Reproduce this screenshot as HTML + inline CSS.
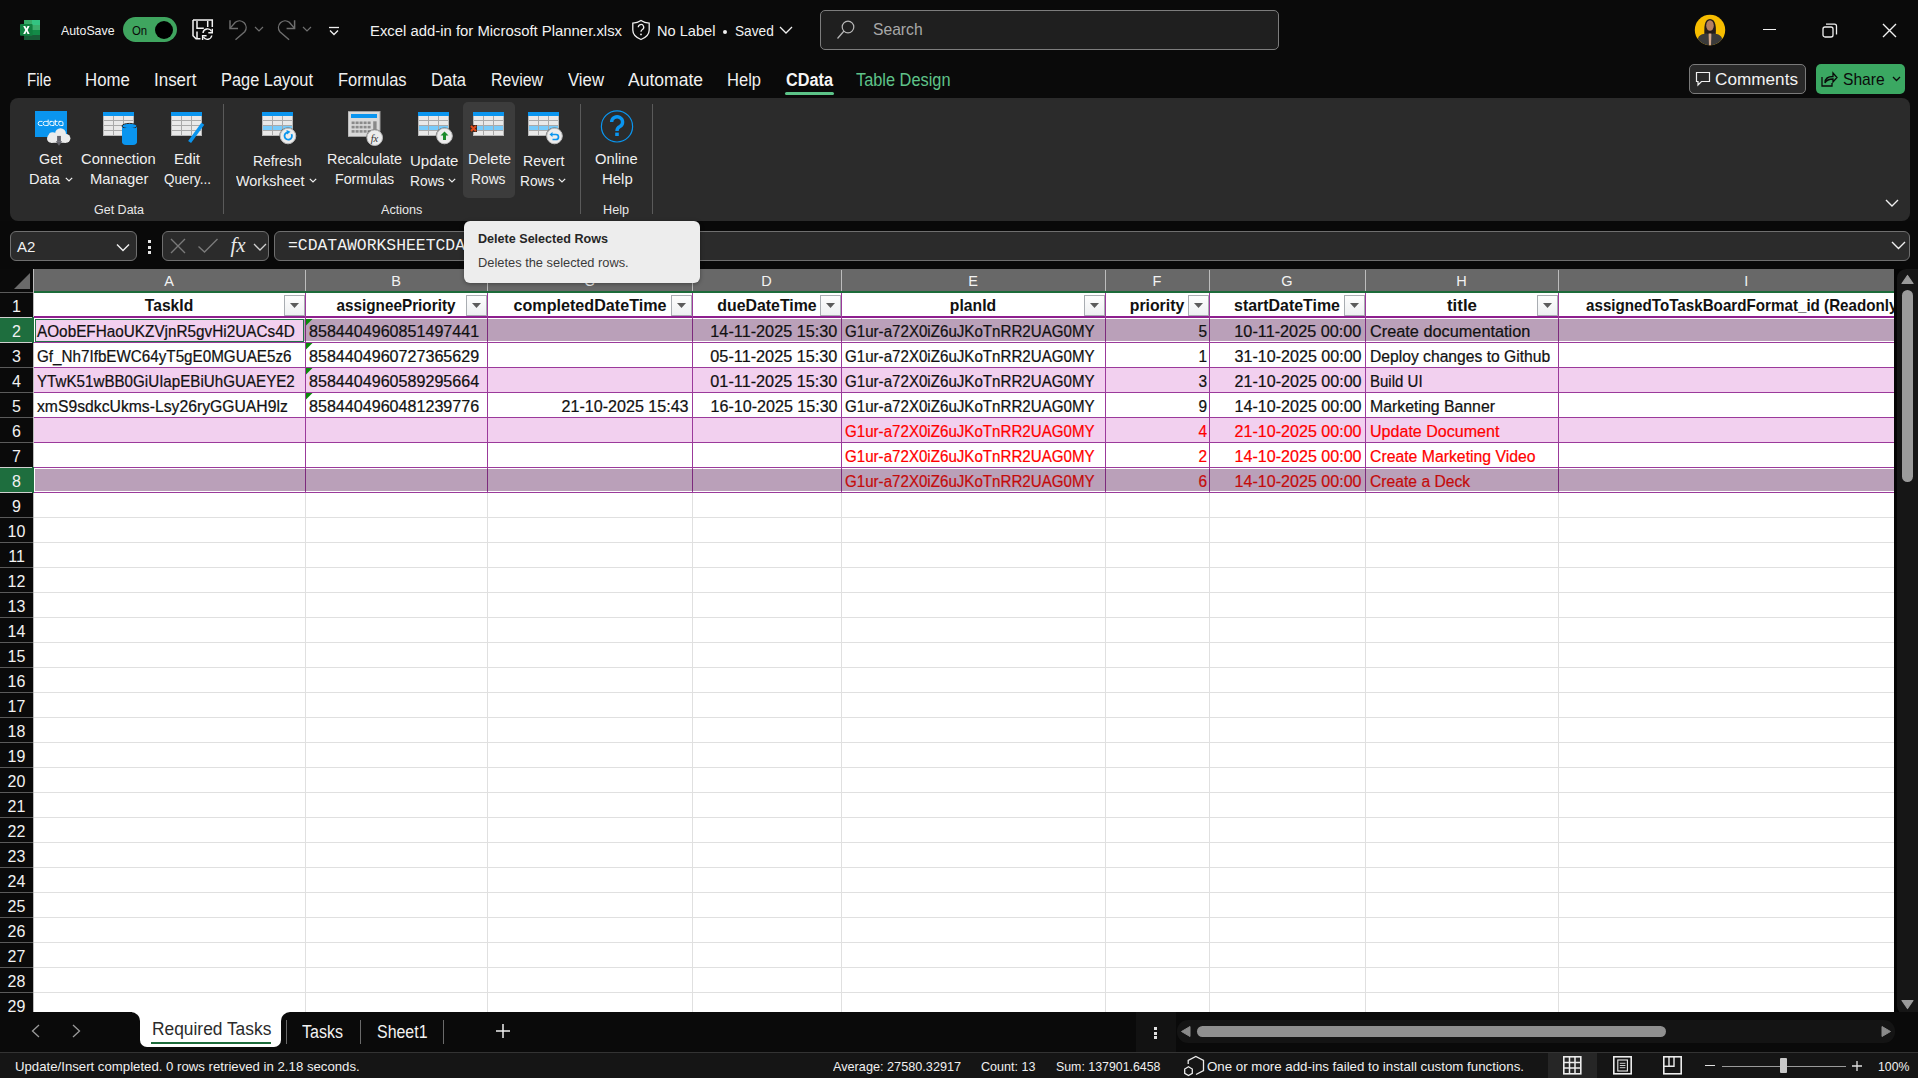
<!DOCTYPE html>
<html><head><meta charset="utf-8"><title>Excel</title><style>
*{margin:0;padding:0;box-sizing:border-box}
html,body{width:1918px;height:1078px;overflow:hidden;background:#0a0a0a;font-family:"Liberation Sans",sans-serif;position:relative}
.a{position:absolute}
.t{position:absolute;white-space:pre;line-height:1}
.s{-webkit-text-stroke:0.22px currentColor}
</style></head><body>
<svg class="a" style="left:20px;top:20px;" width="20" height="20" viewBox="0 0 20 20">
<rect x="4" y="0" width="16" height="20" fill="#1a7f45"/>
<rect x="4" y="0" width="16" height="5" fill="#38ac68"/>
<rect x="12" y="0" width="8" height="5" fill="#33c481"/>
<rect x="12" y="5" width="8" height="5" fill="#3cae6c"/>
<rect x="12" y="10" width="8" height="5" fill="#138a47"/>
<rect x="4" y="15" width="16" height="5" fill="#185c37"/>
<rect x="0" y="4" width="12.6" height="11.7" rx="1" fill="#118040"/>
<path d="M3.2 6 L5.3 6 L6.4 8.6 L7.5 6 L9.6 6 L7.6 9.9 L9.6 14 L7.5 14 L6.4 11.3 L5.3 14 L3.2 14 L5.2 9.9 Z" fill="#fff"/>
</svg>
<div class="t" style="left:61.00px;top:23.95px;font-size:13px;color:#f2f2f2;transform:scaleX(0.9490);transform-origin:left 50%;">AutoSave</div>
<div class="a" style="left:123px;top:17px;width:54px;height:25px;background:#3fa55f;border-radius:12.5px;"></div>
<div class="t" style="left:132.00px;top:25.32px;font-size:12.8px;color:#0a0a0a;transform:scaleX(0.8900);transform-origin:left 50%;">On</div>
<div class="a" style="left:154.5px;top:21px;width:18px;height:18px;border-radius:50%;background:#000"></div>
<svg class="a" style="left:192px;top:19px;" width="23" height="23" viewBox="0 0 23 23">
<path d="M1 1 V16.8 L4 19.8 H8.5" fill="none" stroke="#f4f4f4" stroke-width="1.5"/>
<path d="M1 1 H20.3 V8" fill="none" stroke="#f4f4f4" stroke-width="1.5"/>
<path d="M5 2 V9.2 H11.8" fill="none" stroke="#f4f4f4" stroke-width="1.5"/>
<path d="M15.7 2 V8" fill="none" stroke="#f4f4f4" stroke-width="1.5"/>
<path d="M5 12.5 V19.8" fill="none" stroke="#f4f4f4" stroke-width="1.5"/>
<path d="M11 14 A4.6 4.6 0 0 1 19.6 12.3" fill="none" stroke="#f4f4f4" stroke-width="1.4"/>
<path d="M20.3 9.8 V13.8 H16.3" fill="none" stroke="#f4f4f4" stroke-width="1.4"/>
<path d="M19.8 16.5 A4.6 4.6 0 0 1 11.4 18.2" fill="none" stroke="#f4f4f4" stroke-width="1.4"/>
<path d="M10.6 21 V16.8 H14.6" fill="none" stroke="#f4f4f4" stroke-width="1.4"/>
</svg>
<svg class="a" style="left:228px;top:19px;" width="21" height="22" viewBox="0 0 21 22"><path d="M2 1.2 V9.4 H10" fill="none" stroke="#6e6e6e" stroke-width="1.5"/><path d="M2 9.4 L7.3 3.3 A6.7 6.7 0 0 1 16.7 12.7 L7.5 20.7" fill="none" stroke="#6e6e6e" stroke-width="1.4"/></svg>
<svg class="a" style="left:254px;top:26px;" width="10" height="6" viewBox="0 0 10 6"><path d="M1 1 L5 5 L9 1" fill="none" stroke="#6e6e6e" stroke-width="1.2"/></svg>
<svg class="a" style="left:276px;top:19px;" width="21" height="22" viewBox="0 0 21 22"><g transform="translate(20.6,0) scale(-1,1)"><path d="M2 1.2 V9.4 H10" fill="none" stroke="#6e6e6e" stroke-width="1.5"/><path d="M2 9.4 L7.3 3.3 A6.7 6.7 0 0 1 16.7 12.7 L7.5 20.7" fill="none" stroke="#6e6e6e" stroke-width="1.4"/></g></svg>
<svg class="a" style="left:302px;top:26px;" width="10" height="6" viewBox="0 0 10 6"><path d="M1 1 L5 5 L9 1" fill="none" stroke="#6e6e6e" stroke-width="1.2"/></svg>
<svg class="a" style="left:328px;top:26px;" width="12" height="10" viewBox="0 0 12 10"><path d="M1 1.5 H11" stroke="#f0f0f0" stroke-width="1.3"/><path d="M2 4.5 L6 8.5 L10 4.5" fill="none" stroke="#f0f0f0" stroke-width="1.3"/></svg>
<div class="t" style="left:369.50px;top:22.83px;font-size:15.5px;color:#f2f2f2;transform:scaleX(0.9591);transform-origin:left 50%;">Excel add-in for Microsoft Planner.xlsx</div>
<svg class="a" style="left:631px;top:19px;" width="20" height="22" viewBox="0 0 20 22">
<path d="M10 1.5 C7 3.5 4.5 4 1.8 4.2 V11 C1.8 15.5 5 18.5 10 20.5 C15 18.5 18.2 15.5 18.2 11 V4.2 C15.5 4 13 3.5 10 1.5 Z" fill="none" stroke="#f0f0f0" stroke-width="1.3"/>
<path d="M7.3 8.3 A2.7 2.7 0 1 1 11.4 10.5 C10.4 11.1 10 11.6 10 12.8" fill="none" stroke="#f0f0f0" stroke-width="1.3"/>
<circle cx="10" cy="15.4" r="0.9" fill="#f0f0f0"/>
</svg>
<div class="t" style="left:656.50px;top:22.75px;font-size:15px;color:#f2f2f2;transform:scaleX(0.9742);transform-origin:left 50%;">No Label</div>
<div class="a" style="left:723px;top:29.5px;width:4.2px;height:4.2px;border-radius:50%;background:#f0f0f0"></div>
<div class="t" style="left:734.50px;top:22.75px;font-size:15px;color:#f2f2f2;transform:scaleX(0.9119);transform-origin:left 50%;">Saved</div>
<svg class="a" style="left:779px;top:26px;" width="14" height="8" viewBox="0 0 14 8"><path d="M1 1 L7 7 L13 1" fill="none" stroke="#f0f0f0" stroke-width="1.3"/></svg>
<div class="a" style="left:820px;top:10px;width:459px;height:40px;background:#1f1f1f;border:1px solid #7d7d7d;border-radius:5px;"></div>
<svg class="a" style="left:835px;top:20px;" width="20" height="20" viewBox="0 0 20 20"><circle cx="13" cy="7" r="5.8" fill="none" stroke="#b8b8b8" stroke-width="1.2"/><path d="M9 11 L2.5 18.5" stroke="#b8b8b8" stroke-width="1.2"/></svg>
<div class="t" style="left:872.50px;top:20.55px;font-size:17px;color:#a8a8a8;transform:scaleX(0.9206);transform-origin:left 50%;">Search</div>
<svg class="a" style="left:1694px;top:14px;" width="32" height="32" viewBox="0 0 32 32">
<defs><clipPath id="avc"><circle cx="16" cy="16" r="15.2"/></clipPath></defs>
<circle cx="16" cy="16" r="15.2" fill="#f7bd00"/>
<g clip-path="url(#avc)">
<path d="M10.5 22 C10 14 10 5 16 5 C22 5 22.5 14 21.5 22 Z" fill="#231c1a"/>
<ellipse cx="16" cy="11.5" rx="3.8" ry="5.2" fill="#b57f62"/>
<path d="M2 32 L4.5 23 C6 20.5 10 19.5 13 19.5 L16 21 L19 19.5 C22 19.5 26 20.5 27.5 23 L30 32 Z" fill="#3a3a3a"/>
<path d="M14.6 19.5 L17.4 19.5 L17 32 L15 32 Z" fill="#d3a88c"/>
</g></svg>
<div class="a" style="left:1763px;top:29px;width:13px;height:1.3px;background:#f0f0f0;"></div>
<svg class="a" style="left:1822px;top:23px;" width="16" height="16" viewBox="0 0 16 16"><rect x="1" y="4" width="10" height="10" rx="2" fill="none" stroke="#f0f0f0" stroke-width="1.3"/><path d="M4 1.2 H12.5 A2 2 0 0 1 14.5 3.2 V11.5" fill="none" stroke="#f0f0f0" stroke-width="1.3"/></svg>
<svg class="a" style="left:1882px;top:23px;" width="15" height="15" viewBox="0 0 15 15"><path d="M1 1 L14 14 M14 1 L1 14" stroke="#f0f0f0" stroke-width="1.4"/></svg>
<div class="t" style="left:27.00px;top:72.33px;font-size:17.5px;color:#f0f0f0;transform:scaleX(0.8616);transform-origin:left 50%;">File</div>
<div class="t" style="left:84.60px;top:72.33px;font-size:17.5px;color:#f0f0f0;transform:scaleX(0.9596);transform-origin:left 50%;">Home</div>
<div class="t" style="left:154.00px;top:72.33px;font-size:17.5px;color:#f0f0f0;transform:scaleX(0.9685);transform-origin:left 50%;">Insert</div>
<div class="t" style="left:221.00px;top:72.33px;font-size:17.5px;color:#f0f0f0;transform:scaleX(0.9361);transform-origin:left 50%;">Page Layout</div>
<div class="t" style="left:338.00px;top:72.33px;font-size:17.5px;color:#f0f0f0;transform:scaleX(0.9405);transform-origin:left 50%;">Formulas</div>
<div class="t" style="left:431.00px;top:72.33px;font-size:17.5px;color:#f0f0f0;transform:scaleX(0.9467);transform-origin:left 50%;">Data</div>
<div class="t" style="left:491.00px;top:72.33px;font-size:17.5px;color:#f0f0f0;transform:scaleX(0.9061);transform-origin:left 50%;">Review</div>
<div class="t" style="left:568.00px;top:72.33px;font-size:17.5px;color:#f0f0f0;transform:scaleX(0.9568);transform-origin:left 50%;">View</div>
<div class="t" style="left:628.00px;top:72.33px;font-size:17.5px;color:#f0f0f0;transform:scaleX(1.0013);transform-origin:left 50%;">Automate</div>
<div class="t" style="left:727.00px;top:72.33px;font-size:17.5px;color:#f0f0f0;transform:scaleX(0.9444);transform-origin:left 50%;">Help</div>
<div class="t" style="left:785.50px;top:72.33px;font-size:17.5px;color:#f5f5f5;font-weight:bold;transform:scaleX(0.9293);transform-origin:left 50%;">CData</div>
<div class="a" style="left:785px;top:92px;width:49px;height:3px;background:#5cc388;border-radius:1.5px;"></div>
<div class="t" style="left:856.00px;top:72.33px;font-size:17.5px;color:#5fc389;transform:scaleX(0.9341);transform-origin:left 50%;">Table Design</div>
<div class="a" style="left:1689px;top:64px;width:117px;height:30px;background:#292929;border:1px solid #7a7a7a;border-radius:5px;"></div>
<svg class="a" style="left:1695px;top:71px;" width="16" height="16" viewBox="0 0 16 16"><path d="M1.5 1.5 H14.5 V10.5 H6.5 L3 14 V10.5 H1.5 Z" fill="none" stroke="#f0f0f0" stroke-width="1.2"/></svg>
<div class="t" style="left:1715.00px;top:71.25px;font-size:17px;color:#f2f2f2;transform:scaleX(1.0099);transform-origin:left 50%;">Comments</div>
<div class="a" style="left:1816px;top:64px;width:89px;height:30px;background:#3ba862;border-radius:5px;"></div>
<svg class="a" style="left:1820px;top:70px;" width="18" height="18" viewBox="0 0 18 18"><path d="M2 7 V16 H12 V13" fill="none" stroke="#0a0a0a" stroke-width="1.3"/><path d="M5 13 C5 8 8 6.5 13 6.5 V3 L17 7.5 L13 12 V9 C9 9 6.5 10 5 13 Z" fill="none" stroke="#0a0a0a" stroke-width="1.3"/></svg>
<div class="t" style="left:1842.50px;top:71.25px;font-size:17px;color:#0a0a0a;transform:scaleX(0.9168);transform-origin:left 50%;">Share</div>
<svg class="a" style="left:1892px;top:76px;" width="9" height="6" viewBox="0 0 9 6"><path d="M1 1 L4.5 4.5 L8 1" fill="none" stroke="#0a0a0a" stroke-width="1.3"/></svg>
<div class="a" style="left:10px;top:98px;width:1900px;height:123px;background:#2b2b2b;border-radius:8px;"></div>
<svg class="a" style="left:33px;top:109px;" width="40" height="38" viewBox="0 0 40 38">
<rect x="2" y="2" width="32" height="26" fill="#0a95ef"/>
<g fill="none" stroke="#ffffff" stroke-width="0.9">
<path d="M9.5 12.4 H7.2 A2.05 2.05 0 0 0 7.2 16.5 H9.5"/>
<path d="M15.2 10.6 V16.5 H12.2 A2.05 2.05 0 0 1 12.2 12.4 H15.2"/>
<path d="M16.6 12.4 H19.4 A1.6 1.6 0 0 1 21 14 V16.5 H18.6 A2.05 2.05 0 0 1 18.6 12.4"/>
<path d="M22.3 10.8 V15 A1.5 1.5 0 0 0 23.8 16.5 H24.8 M21.4 12.4 H24.6"/>
<path d="M25.6 12.4 H28.4 A1.6 1.6 0 0 1 30 14 V16.5 H27.6 A2.05 2.05 0 0 1 27.6 12.4"/>
</g>
<g fill="#ececec">
<circle cx="27.5" cy="24.6" r="5.4"/>
<circle cx="19.6" cy="27.3" r="4.1"/>
<circle cx="33" cy="29.3" r="4.4"/>
<circle cx="18.3" cy="29.5" r="4.3"/>
<rect x="18" y="27" width="15" height="6.8"/>
</g>
<rect x="24.1" y="26.9" width="3.8" height="5.6" fill="#62626a"/>
<path d="M22.8 32.3 H29.2 L26 36.8 Z" fill="#62626a"/>
</svg>
<div class="t" style="left:38.90px;top:152.42px;font-size:14.8px;color:#f0f0f0;transform:scaleX(0.9682);transform-origin:left 50%;">Get</div>
<div class="t" style="left:28.70px;top:171.92px;font-size:14.8px;color:#f0f0f0;transform:scaleX(0.9851);transform-origin:left 50%;">Data</div>
<svg class="a" style="left:65px;top:177px;" width="8" height="5" viewBox="0 0 8 5"><path d="M0.8 0.8 L4 4 L7.2 0.8" fill="none" stroke="#f0f0f0" stroke-width="1.2"/></svg>
<svg class="a" style="left:103px;top:112px;" width="36" height="34" viewBox="0 0 36 34"><rect x="0" y="0" width="31" height="24" fill="#e9e9e9"/><rect x="0" y="0" width="31" height="4" fill="#0a95ef"/><path d="M0 8.5 H31" stroke="#a9a9a9" stroke-width="1"/><path d="M0 13.5 H31" stroke="#a9a9a9" stroke-width="1"/><path d="M0 18.5 H31" stroke="#a9a9a9" stroke-width="1"/><path d="M10.5 4 V24" stroke="#a9a9a9" stroke-width="1"/><path d="M20.5 4 V24" stroke="#a9a9a9" stroke-width="1"/><rect x="0.5" y="0.5" width="30" height="23" fill="none" stroke="#b8b8b8" stroke-width="1"/><rect x="0" y="0" width="31" height="4" fill="#0a95ef"/>
<rect x="19" y="13" width="15" height="19" rx="3" fill="#0a95ef"/>
<ellipse cx="26.5" cy="14" rx="7.5" ry="2.6" fill="#0a95ef" stroke="#2b2b2b" stroke-width="1"/>
<rect x="19" y="16" width="15" height="17" rx="4" fill="#0a95ef"/>
</svg>
<div class="t" style="left:81.00px;top:152.42px;font-size:14.8px;color:#f0f0f0;transform:scaleX(0.9965);transform-origin:left 50%;">Connection</div>
<div class="t" style="left:89.60px;top:171.92px;font-size:14.8px;color:#f0f0f0;transform:scaleX(0.9999);transform-origin:left 50%;">Manager</div>
<svg class="a" style="left:171px;top:112px;" width="36" height="32" viewBox="0 0 36 32"><rect x="0" y="0" width="31" height="24" fill="#e9e9e9"/><rect x="0" y="0" width="31" height="4" fill="#0a95ef"/><path d="M0 8.5 H31" stroke="#a9a9a9" stroke-width="1"/><path d="M0 13.5 H31" stroke="#a9a9a9" stroke-width="1"/><path d="M0 18.5 H31" stroke="#a9a9a9" stroke-width="1"/><path d="M10.5 4 V24" stroke="#a9a9a9" stroke-width="1"/><path d="M20.5 4 V24" stroke="#a9a9a9" stroke-width="1"/><rect x="0.5" y="0.5" width="30" height="23" fill="none" stroke="#b8b8b8" stroke-width="1"/><rect x="0" y="0" width="31" height="4" fill="#0a95ef"/>
<path d="M31.8 11.8 L18.6 30" stroke="#0a95ef" stroke-width="3.6"/>
</svg>
<div class="t" style="left:174.00px;top:152.42px;font-size:14.8px;color:#f0f0f0;transform:scaleX(1.0196);transform-origin:left 50%;">Edit</div>
<div class="t" style="left:163.60px;top:171.92px;font-size:14.8px;color:#f0f0f0;transform:scaleX(0.9101);transform-origin:left 50%;">Query...</div>
<div class="t" style="left:93.50px;top:204.00px;font-size:12px;color:#e8e8e8;transform:scaleX(1.0410);transform-origin:left 50%;">Get Data</div>
<div class="a" style="left:223px;top:104px;width:1px;height:110px;background:#5a5a5a;"></div>
<svg class="a" style="left:262px;top:112px;" width="36" height="33" viewBox="0 0 36 33"><rect x="0" y="0" width="31" height="24" fill="#e9e9e9"/><rect x="0" y="0" width="31" height="4" fill="#0a95ef"/><rect x="0.5" y="14" width="30" height="4" fill="#78cbfb"/><path d="M0 8.5 H31" stroke="#a9a9a9" stroke-width="1"/><path d="M0 13.5 H31" stroke="#a9a9a9" stroke-width="1"/><path d="M0 18.5 H31" stroke="#a9a9a9" stroke-width="1"/><path d="M10.5 4 V24" stroke="#a9a9a9" stroke-width="1"/><path d="M20.5 4 V24" stroke="#a9a9a9" stroke-width="1"/><rect x="0.5" y="0.5" width="30" height="23" fill="none" stroke="#b8b8b8" stroke-width="1"/><rect x="0" y="0" width="31" height="4" fill="#0a95ef"/><circle cx="26" cy="24" r="8.8" fill="#2b2b2b" fill-opacity="0.55"/><circle cx="26" cy="24" r="7.8" fill="#ececec" stroke="#b8b8b8" stroke-width="1"/>
<path d="M29.5 22.2 A3.7 3.7 0 1 1 25.5 20.3" fill="none" stroke="#0a95ef" stroke-width="1.8"/>
<path d="M24.5 18 L28.5 19.8 L25 22.5 Z" fill="#0a95ef"/>
</svg>
<div class="t" style="left:253.00px;top:154.12px;font-size:14.8px;color:#f0f0f0;transform:scaleX(0.9380);transform-origin:left 50%;">Refresh</div>
<div class="t" style="left:236.00px;top:174.12px;font-size:14.8px;color:#f0f0f0;transform:scaleX(0.9737);transform-origin:left 50%;">Worksheet</div>
<svg class="a" style="left:309px;top:178px;" width="8" height="5" viewBox="0 0 8 5"><path d="M0.8 0.8 L4 4 L7.2 0.8" fill="none" stroke="#f0f0f0" stroke-width="1.2"/></svg>
<svg class="a" style="left:348px;top:111px;" width="36" height="36" viewBox="0 0 36 36">
<rect x="0" y="0.5" width="32" height="25" fill="#d9d9d9" stroke="#a0a0a0" stroke-width="1"/>
<rect x="3" y="3" width="26" height="4" fill="#0a95ef"/>
<g fill="#8a8a8a"><rect x="3.6" y="10.5" width="3" height="2.6"/><rect x="7.6" y="10.5" width="3" height="2.6"/><rect x="11.6" y="10.5" width="3" height="2.6"/><rect x="15.6" y="10.5" width="3" height="2.6"/><rect x="19.6" y="10.5" width="3" height="2.6"/><rect x="3.6" y="14.8" width="3" height="2.6"/><rect x="7.6" y="14.8" width="3" height="2.6"/><rect x="11.6" y="14.8" width="3" height="2.6"/><rect x="15.6" y="14.8" width="3" height="2.6"/><rect x="19.6" y="14.8" width="3" height="2.6"/><rect x="3.6" y="19.1" width="3" height="2.6"/><rect x="7.6" y="19.1" width="3" height="2.6"/><rect x="11.6" y="19.1" width="3" height="2.6"/><rect x="15.6" y="19.1" width="3" height="2.6"/><rect x="19.6" y="19.1" width="3" height="2.6"/><rect x="25.2" y="10.3" width="3.4" height="8.5"/></g>
<circle cx="26.7" cy="26.7" r="8.8" fill="#2b2b2b" fill-opacity="0.55"/><circle cx="26.7" cy="26.7" r="7.8" fill="#ececec" stroke="#b8b8b8" stroke-width="1"/><text x="26.5" y="30.5" font-family="Liberation Serif" font-style="italic" font-size="10.5" fill="#333" text-anchor="middle">fx</text></svg>
<div class="t" style="left:326.50px;top:152.42px;font-size:14.8px;color:#f0f0f0;transform:scaleX(0.9712);transform-origin:left 50%;">Recalculate</div>
<div class="t" style="left:334.60px;top:171.92px;font-size:14.8px;color:#f0f0f0;transform:scaleX(0.9599);transform-origin:left 50%;">Formulas</div>
<svg class="a" style="left:418px;top:112px;" width="36" height="33" viewBox="0 0 36 33"><rect x="0" y="0" width="31" height="24" fill="#e9e9e9"/><rect x="0" y="0" width="31" height="4" fill="#0a95ef"/><rect x="0.5" y="14" width="30" height="4" fill="#78cbfb"/><path d="M0 8.5 H31" stroke="#a9a9a9" stroke-width="1"/><path d="M0 13.5 H31" stroke="#a9a9a9" stroke-width="1"/><path d="M0 18.5 H31" stroke="#a9a9a9" stroke-width="1"/><path d="M10.5 4 V24" stroke="#a9a9a9" stroke-width="1"/><path d="M20.5 4 V24" stroke="#a9a9a9" stroke-width="1"/><rect x="0.5" y="0.5" width="30" height="23" fill="none" stroke="#b8b8b8" stroke-width="1"/><rect x="0" y="0" width="31" height="4" fill="#0a95ef"/><circle cx="26.5" cy="24" r="8.8" fill="#2b2b2b" fill-opacity="0.55"/><circle cx="26.5" cy="24" r="7.8" fill="#ececec" stroke="#b8b8b8" stroke-width="1"/>
<path d="M26.5 19.5 L30.5 23.5 H28 V28 H25 V23.5 H22.5 Z" fill="#1a8a2a"/>
</svg>
<div class="t" style="left:409.50px;top:154.12px;font-size:14.8px;color:#f0f0f0;transform:scaleX(1.0143);transform-origin:left 50%;">Update</div>
<div class="t" style="left:409.50px;top:174.12px;font-size:14.8px;color:#f0f0f0;transform:scaleX(0.9324);transform-origin:left 50%;">Rows</div>
<svg class="a" style="left:448px;top:178px;" width="8" height="5" viewBox="0 0 8 5"><path d="M0.8 0.8 L4 4 L7.2 0.8" fill="none" stroke="#f0f0f0" stroke-width="1.2"/></svg>
<div class="a" style="left:463px;top:102px;width:52px;height:96px;background:#3c3c3c;border-radius:5px;"></div>
<svg class="a" style="left:469px;top:112px;" width="36" height="26" viewBox="0 0 36 26"><g transform="translate(4,0)"><rect x="0" y="0" width="31" height="24" fill="#e9e9e9"/><rect x="0" y="0" width="31" height="4" fill="#0a95ef"/><rect x="0.5" y="14" width="30" height="4" fill="#78cbfb"/><path d="M0 8.5 H31" stroke="#a9a9a9" stroke-width="1"/><path d="M0 13.5 H31" stroke="#a9a9a9" stroke-width="1"/><path d="M0 18.5 H31" stroke="#a9a9a9" stroke-width="1"/><path d="M10.5 4 V24" stroke="#a9a9a9" stroke-width="1"/><path d="M20.5 4 V24" stroke="#a9a9a9" stroke-width="1"/><rect x="0.5" y="0.5" width="30" height="23" fill="none" stroke="#b8b8b8" stroke-width="1"/><rect x="0" y="0" width="31" height="4" fill="#0a95ef"/></g>
<rect x="1" y="13" width="7" height="7" fill="#3a2a22"/>
<path d="M2 14 L7 19 M7 14 L2 19" stroke="#e04a1a" stroke-width="2"/>
</svg>
<div class="t" style="left:467.60px;top:152.42px;font-size:14.8px;color:#f0f0f0;transform:scaleX(1.0075);transform-origin:left 50%;">Delete</div>
<div class="t" style="left:471.20px;top:171.92px;font-size:14.8px;color:#f0f0f0;transform:scaleX(0.9324);transform-origin:left 50%;">Rows</div>
<svg class="a" style="left:528px;top:112px;" width="36" height="33" viewBox="0 0 36 33"><rect x="0" y="0" width="31" height="24" fill="#e9e9e9"/><rect x="0" y="0" width="31" height="4" fill="#0a95ef"/><rect x="0.5" y="14" width="30" height="4" fill="#78cbfb"/><path d="M0 8.5 H31" stroke="#a9a9a9" stroke-width="1"/><path d="M0 13.5 H31" stroke="#a9a9a9" stroke-width="1"/><path d="M0 18.5 H31" stroke="#a9a9a9" stroke-width="1"/><path d="M10.5 4 V24" stroke="#a9a9a9" stroke-width="1"/><path d="M20.5 4 V24" stroke="#a9a9a9" stroke-width="1"/><rect x="0.5" y="0.5" width="30" height="23" fill="none" stroke="#b8b8b8" stroke-width="1"/><rect x="0" y="0" width="31" height="4" fill="#0a95ef"/><circle cx="26.5" cy="24" r="8.8" fill="#2b2b2b" fill-opacity="0.55"/><circle cx="26.5" cy="24" r="7.8" fill="#ececec" stroke="#b8b8b8" stroke-width="1"/>
<path d="M23 22.5 H28 A2.5 2.5 0 0 1 28 27.5 H24.5" fill="none" stroke="#0a95ef" stroke-width="1.7"/>
<path d="M21.5 22.5 L24.5 20 V25 Z" fill="#0a95ef"/>
</svg>
<div class="t" style="left:523.30px;top:154.12px;font-size:14.8px;color:#f0f0f0;transform:scaleX(0.9497);transform-origin:left 50%;">Revert</div>
<div class="t" style="left:519.60px;top:174.12px;font-size:14.8px;color:#f0f0f0;transform:scaleX(0.9297);transform-origin:left 50%;">Rows</div>
<svg class="a" style="left:558px;top:178px;" width="8" height="5" viewBox="0 0 8 5"><path d="M0.8 0.8 L4 4 L7.2 0.8" fill="none" stroke="#f0f0f0" stroke-width="1.2"/></svg>
<div class="t" style="left:381.40px;top:204.00px;font-size:12px;color:#e8e8e8;transform:scaleX(1.0518);transform-origin:left 50%;">Actions</div>
<div class="a" style="left:580px;top:104px;width:1px;height:110px;background:#5a5a5a;"></div>
<svg class="a" style="left:600px;top:109px;" width="34" height="34" viewBox="0 0 34 34">
<circle cx="17" cy="17.4" r="15.6" fill="none" stroke="#0a95ef" stroke-width="1.2"/>
<path d="M11.6 13 A5.5 5.3 0 1 1 19.9 17.6 C18 18.6 17 19.6 17 22" fill="none" stroke="#0a95ef" stroke-width="3.4"/>
<rect x="15.2" y="23.6" width="3.6" height="3.4" fill="#0a95ef"/>
</svg>
<div class="t" style="left:595.00px;top:152.42px;font-size:14.8px;color:#f0f0f0;transform:scaleX(0.9958);transform-origin:left 50%;">Online</div>
<div class="t" style="left:601.70px;top:171.92px;font-size:14.8px;color:#f0f0f0;transform:scaleX(1.0086);transform-origin:left 50%;">Help</div>
<div class="t" style="left:603.40px;top:204.00px;font-size:12px;color:#e8e8e8;transform:scaleX(1.0532);transform-origin:left 50%;">Help</div>
<div class="a" style="left:652px;top:104px;width:1px;height:110px;background:#5a5a5a;"></div>
<svg class="a" style="left:1885px;top:199px;" width="14" height="9" viewBox="0 0 14 9"><path d="M1 1 L7 7 L13 1" fill="none" stroke="#f0f0f0" stroke-width="1.4"/></svg>
<div class="a" style="left:0px;top:221px;width:1918px;height:48px;background:#090909;"></div>
<div class="a" style="left:10px;top:231px;width:127px;height:30px;background:#2b2b2b;border:1px solid #6f6f6f;border-radius:6px;"></div>
<div class="t" style="left:17.00px;top:239.25px;font-size:15px;color:#f2f2f2;">A2</div>
<svg class="a" style="left:116px;top:243px;" width="15" height="9" viewBox="0 0 15 9"><path d="M1 1.5 L7 7.5 L13 1.5" fill="none" stroke="#f0f0f0" stroke-width="1.4"/></svg>
<div class="a" style="left:148px;top:240px;width:3px;height:3px;background:#e8e8e8;"></div>
<div class="a" style="left:148px;top:245.5px;width:3px;height:3px;background:#e8e8e8;"></div>
<div class="a" style="left:148px;top:251px;width:3px;height:3px;background:#e8e8e8;"></div>
<div class="a" style="left:162px;top:231px;width:107px;height:30px;background:#2b2b2b;border:1px solid #6f6f6f;border-radius:6px;"></div>
<svg class="a" style="left:169px;top:237px;" width="18" height="18" viewBox="0 0 18 18"><path d="M2 2 L16 16 M16 2 L2 16" stroke="#7a7a7a" stroke-width="1.4"/></svg>
<svg class="a" style="left:197px;top:237px;" width="22" height="17" viewBox="0 0 22 17"><path d="M1.5 9.5 L7.5 15 L20.5 2" fill="none" stroke="#7a7a7a" stroke-width="1.4"/></svg>
<div class="t" style="left:-262.00px;width:1000px;text-align:center;top:234.65px;font-size:21px;color:#e8e8e8;font-family:'Liberation Serif',serif;font-style:italic;">fx</div>
<svg class="a" style="left:253px;top:243px;" width="14" height="8" viewBox="0 0 14 8"><path d="M1 1 L7 7 L13 1" fill="none" stroke="#d0d0d0" stroke-width="1.3"/></svg>
<div class="a" style="left:274px;top:231px;width:1636px;height:30px;background:#2b2b2b;border:1px solid #6f6f6f;border-radius:6px;"></div>
<div class="t" style="left:287.50px;top:238.43px;font-size:16.2px;color:#f2f2f2;transform:scaleX(1.0122);transform-origin:left 50%;font-family:'Liberation Mono',monospace;">=CDATAWORKSHEETCDA</div>
<svg class="a" style="left:1891px;top:241px;" width="15" height="9" viewBox="0 0 15 9"><path d="M1 1 L7.5 7.5 L14 1" fill="none" stroke="#f0f0f0" stroke-width="1.4"/></svg>
<div class="a" style="left:0px;top:269px;width:33px;height:743px;background:#0a0a0a;"></div>
<div class="a" style="left:34px;top:293px;width:1860px;height:719px;background:#ffffff;"></div>
<div class="a" style="left:34px;top:269px;width:1860px;height:22px;background:#686868;"></div>
<div class="a" style="left:33px;top:291px;width:1861px;height:2px;background:#1d6b3a;"></div>
<div class="a" style="left:33px;top:269px;width:1px;height:743px;background:#bdbdbd;"></div>
<svg class="a" style="left:12px;top:272px;" width="20" height="18" viewBox="0 0 20 18"><path d="M18 1 V17 H2 Z" fill="#6a6a6a"/></svg>
<div class="a" style="left:0px;top:292px;width:33px;height:1px;background:#5a5a5a;"></div>
<div class="t" style="left:-331.00px;width:1000px;text-align:center;top:273.98px;font-size:14.5px;color:#f2f2f2;">A</div>
<div class="t" style="left:-104.00px;width:1000px;text-align:center;top:273.98px;font-size:14.5px;color:#f2f2f2;">B</div>
<div class="t" style="left:89.50px;width:1000px;text-align:center;top:273.98px;font-size:14.5px;color:#f2f2f2;">C</div>
<div class="t" style="left:266.50px;width:1000px;text-align:center;top:273.98px;font-size:14.5px;color:#f2f2f2;">D</div>
<div class="t" style="left:473.00px;width:1000px;text-align:center;top:273.98px;font-size:14.5px;color:#f2f2f2;">E</div>
<div class="t" style="left:657.00px;width:1000px;text-align:center;top:273.98px;font-size:14.5px;color:#f2f2f2;">F</div>
<div class="t" style="left:787.00px;width:1000px;text-align:center;top:273.98px;font-size:14.5px;color:#f2f2f2;">G</div>
<div class="t" style="left:961.50px;width:1000px;text-align:center;top:273.98px;font-size:14.5px;color:#f2f2f2;">H</div>
<div class="t" style="left:1246.30px;width:1000px;text-align:center;top:273.98px;font-size:14.5px;color:#f2f2f2;">I</div>
<div class="a" style="left:305px;top:270px;width:1px;height:21px;background:#bdbdbd;"></div>
<div class="a" style="left:487px;top:270px;width:1px;height:21px;background:#bdbdbd;"></div>
<div class="a" style="left:692px;top:270px;width:1px;height:21px;background:#bdbdbd;"></div>
<div class="a" style="left:841px;top:270px;width:1px;height:21px;background:#bdbdbd;"></div>
<div class="a" style="left:1105px;top:270px;width:1px;height:21px;background:#bdbdbd;"></div>
<div class="a" style="left:1209px;top:270px;width:1px;height:21px;background:#bdbdbd;"></div>
<div class="a" style="left:1365px;top:270px;width:1px;height:21px;background:#bdbdbd;"></div>
<div class="a" style="left:1558px;top:270px;width:1px;height:21px;background:#bdbdbd;"></div>
<div class="a" style="left:34px;top:517px;width:1860px;height:1px;background:#e0e0e0;"></div>
<div class="a" style="left:34px;top:542px;width:1860px;height:1px;background:#e0e0e0;"></div>
<div class="a" style="left:34px;top:567px;width:1860px;height:1px;background:#e0e0e0;"></div>
<div class="a" style="left:34px;top:592px;width:1860px;height:1px;background:#e0e0e0;"></div>
<div class="a" style="left:34px;top:617px;width:1860px;height:1px;background:#e0e0e0;"></div>
<div class="a" style="left:34px;top:642px;width:1860px;height:1px;background:#e0e0e0;"></div>
<div class="a" style="left:34px;top:667px;width:1860px;height:1px;background:#e0e0e0;"></div>
<div class="a" style="left:34px;top:692px;width:1860px;height:1px;background:#e0e0e0;"></div>
<div class="a" style="left:34px;top:717px;width:1860px;height:1px;background:#e0e0e0;"></div>
<div class="a" style="left:34px;top:742px;width:1860px;height:1px;background:#e0e0e0;"></div>
<div class="a" style="left:34px;top:767px;width:1860px;height:1px;background:#e0e0e0;"></div>
<div class="a" style="left:34px;top:792px;width:1860px;height:1px;background:#e0e0e0;"></div>
<div class="a" style="left:34px;top:817px;width:1860px;height:1px;background:#e0e0e0;"></div>
<div class="a" style="left:34px;top:842px;width:1860px;height:1px;background:#e0e0e0;"></div>
<div class="a" style="left:34px;top:867px;width:1860px;height:1px;background:#e0e0e0;"></div>
<div class="a" style="left:34px;top:892px;width:1860px;height:1px;background:#e0e0e0;"></div>
<div class="a" style="left:34px;top:917px;width:1860px;height:1px;background:#e0e0e0;"></div>
<div class="a" style="left:34px;top:942px;width:1860px;height:1px;background:#e0e0e0;"></div>
<div class="a" style="left:34px;top:967px;width:1860px;height:1px;background:#e0e0e0;"></div>
<div class="a" style="left:34px;top:992px;width:1860px;height:1px;background:#e0e0e0;"></div>
<div class="a" style="left:305px;top:493px;width:1px;height:519px;background:#e0e0e0;"></div>
<div class="a" style="left:487px;top:493px;width:1px;height:519px;background:#e0e0e0;"></div>
<div class="a" style="left:692px;top:493px;width:1px;height:519px;background:#e0e0e0;"></div>
<div class="a" style="left:841px;top:493px;width:1px;height:519px;background:#e0e0e0;"></div>
<div class="a" style="left:1105px;top:493px;width:1px;height:519px;background:#e0e0e0;"></div>
<div class="a" style="left:1209px;top:493px;width:1px;height:519px;background:#e0e0e0;"></div>
<div class="a" style="left:1365px;top:493px;width:1px;height:519px;background:#e0e0e0;"></div>
<div class="a" style="left:1558px;top:493px;width:1px;height:519px;background:#e0e0e0;"></div>
<div class="a" style="left:0px;top:317px;width:33px;height:1px;background:#5a5a5a;"></div>
<div class="t" style="left:-483.50px;width:1000px;text-align:center;top:298.90px;font-size:16px;color:#f2f2f2;">1</div>
<div class="a" style="left:0px;top:342px;width:33px;height:1px;background:#5a5a5a;"></div>
<div class="a" style="left:0px;top:318px;width:33px;height:24px;background:#1e6e3e;"></div>
<div class="a" style="left:0px;top:317px;width:33px;height:1px;background:#d0d0d0;"></div>
<div class="a" style="left:0px;top:342px;width:33px;height:1px;background:#d0d0d0;"></div>
<div class="a" style="left:32px;top:317px;width:2px;height:26px;background:#1e6e3e;"></div>
<div class="t" style="left:-483.50px;width:1000px;text-align:center;top:323.90px;font-size:16px;color:#f2f2f2;">2</div>
<div class="a" style="left:0px;top:367px;width:33px;height:1px;background:#5a5a5a;"></div>
<div class="t" style="left:-483.50px;width:1000px;text-align:center;top:348.90px;font-size:16px;color:#f2f2f2;">3</div>
<div class="a" style="left:0px;top:392px;width:33px;height:1px;background:#5a5a5a;"></div>
<div class="t" style="left:-483.50px;width:1000px;text-align:center;top:373.90px;font-size:16px;color:#f2f2f2;">4</div>
<div class="a" style="left:0px;top:417px;width:33px;height:1px;background:#5a5a5a;"></div>
<div class="t" style="left:-483.50px;width:1000px;text-align:center;top:398.90px;font-size:16px;color:#f2f2f2;">5</div>
<div class="a" style="left:0px;top:442px;width:33px;height:1px;background:#5a5a5a;"></div>
<div class="t" style="left:-483.50px;width:1000px;text-align:center;top:423.90px;font-size:16px;color:#f2f2f2;">6</div>
<div class="a" style="left:0px;top:467px;width:33px;height:1px;background:#5a5a5a;"></div>
<div class="t" style="left:-483.50px;width:1000px;text-align:center;top:448.90px;font-size:16px;color:#f2f2f2;">7</div>
<div class="a" style="left:0px;top:492px;width:33px;height:1px;background:#5a5a5a;"></div>
<div class="a" style="left:0px;top:468px;width:33px;height:24px;background:#1e6e3e;"></div>
<div class="a" style="left:0px;top:467px;width:33px;height:1px;background:#d0d0d0;"></div>
<div class="a" style="left:0px;top:492px;width:33px;height:1px;background:#d0d0d0;"></div>
<div class="a" style="left:32px;top:467px;width:2px;height:26px;background:#1e6e3e;"></div>
<div class="t" style="left:-483.50px;width:1000px;text-align:center;top:473.90px;font-size:16px;color:#f2f2f2;">8</div>
<div class="a" style="left:0px;top:517px;width:33px;height:1px;background:#5a5a5a;"></div>
<div class="t" style="left:-483.50px;width:1000px;text-align:center;top:498.90px;font-size:16px;color:#f2f2f2;">9</div>
<div class="a" style="left:0px;top:542px;width:33px;height:1px;background:#5a5a5a;"></div>
<div class="t" style="left:-483.50px;width:1000px;text-align:center;top:523.90px;font-size:16px;color:#f2f2f2;">10</div>
<div class="a" style="left:0px;top:567px;width:33px;height:1px;background:#5a5a5a;"></div>
<div class="t" style="left:-483.50px;width:1000px;text-align:center;top:548.90px;font-size:16px;color:#f2f2f2;">11</div>
<div class="a" style="left:0px;top:592px;width:33px;height:1px;background:#5a5a5a;"></div>
<div class="t" style="left:-483.50px;width:1000px;text-align:center;top:573.90px;font-size:16px;color:#f2f2f2;">12</div>
<div class="a" style="left:0px;top:617px;width:33px;height:1px;background:#5a5a5a;"></div>
<div class="t" style="left:-483.50px;width:1000px;text-align:center;top:598.90px;font-size:16px;color:#f2f2f2;">13</div>
<div class="a" style="left:0px;top:642px;width:33px;height:1px;background:#5a5a5a;"></div>
<div class="t" style="left:-483.50px;width:1000px;text-align:center;top:623.90px;font-size:16px;color:#f2f2f2;">14</div>
<div class="a" style="left:0px;top:667px;width:33px;height:1px;background:#5a5a5a;"></div>
<div class="t" style="left:-483.50px;width:1000px;text-align:center;top:648.90px;font-size:16px;color:#f2f2f2;">15</div>
<div class="a" style="left:0px;top:692px;width:33px;height:1px;background:#5a5a5a;"></div>
<div class="t" style="left:-483.50px;width:1000px;text-align:center;top:673.90px;font-size:16px;color:#f2f2f2;">16</div>
<div class="a" style="left:0px;top:717px;width:33px;height:1px;background:#5a5a5a;"></div>
<div class="t" style="left:-483.50px;width:1000px;text-align:center;top:698.90px;font-size:16px;color:#f2f2f2;">17</div>
<div class="a" style="left:0px;top:742px;width:33px;height:1px;background:#5a5a5a;"></div>
<div class="t" style="left:-483.50px;width:1000px;text-align:center;top:723.90px;font-size:16px;color:#f2f2f2;">18</div>
<div class="a" style="left:0px;top:767px;width:33px;height:1px;background:#5a5a5a;"></div>
<div class="t" style="left:-483.50px;width:1000px;text-align:center;top:748.90px;font-size:16px;color:#f2f2f2;">19</div>
<div class="a" style="left:0px;top:792px;width:33px;height:1px;background:#5a5a5a;"></div>
<div class="t" style="left:-483.50px;width:1000px;text-align:center;top:773.90px;font-size:16px;color:#f2f2f2;">20</div>
<div class="a" style="left:0px;top:817px;width:33px;height:1px;background:#5a5a5a;"></div>
<div class="t" style="left:-483.50px;width:1000px;text-align:center;top:798.90px;font-size:16px;color:#f2f2f2;">21</div>
<div class="a" style="left:0px;top:842px;width:33px;height:1px;background:#5a5a5a;"></div>
<div class="t" style="left:-483.50px;width:1000px;text-align:center;top:823.90px;font-size:16px;color:#f2f2f2;">22</div>
<div class="a" style="left:0px;top:867px;width:33px;height:1px;background:#5a5a5a;"></div>
<div class="t" style="left:-483.50px;width:1000px;text-align:center;top:848.90px;font-size:16px;color:#f2f2f2;">23</div>
<div class="a" style="left:0px;top:892px;width:33px;height:1px;background:#5a5a5a;"></div>
<div class="t" style="left:-483.50px;width:1000px;text-align:center;top:873.90px;font-size:16px;color:#f2f2f2;">24</div>
<div class="a" style="left:0px;top:917px;width:33px;height:1px;background:#5a5a5a;"></div>
<div class="t" style="left:-483.50px;width:1000px;text-align:center;top:898.90px;font-size:16px;color:#f2f2f2;">25</div>
<div class="a" style="left:0px;top:942px;width:33px;height:1px;background:#5a5a5a;"></div>
<div class="t" style="left:-483.50px;width:1000px;text-align:center;top:923.90px;font-size:16px;color:#f2f2f2;">26</div>
<div class="a" style="left:0px;top:967px;width:33px;height:1px;background:#5a5a5a;"></div>
<div class="t" style="left:-483.50px;width:1000px;text-align:center;top:948.90px;font-size:16px;color:#f2f2f2;">27</div>
<div class="a" style="left:0px;top:992px;width:33px;height:1px;background:#5a5a5a;"></div>
<div class="t" style="left:-483.50px;width:1000px;text-align:center;top:973.90px;font-size:16px;color:#f2f2f2;">28</div>
<div class="a" style="left:0px;top:1017px;width:33px;height:1px;background:#5a5a5a;"></div>
<div class="t" style="left:-483.50px;width:1000px;text-align:center;top:998.90px;font-size:16px;color:#f2f2f2;">29</div>
<div class="a" style="left:34px;top:368px;width:1860px;height:24px;background:#f2d0ef;"></div>
<div class="a" style="left:34px;top:418px;width:1860px;height:24px;background:#f2d0ef;"></div>
<div class="a" style="left:35px;top:319px;width:1859px;height:22px;background:#baa0b9;"></div>
<div class="a" style="left:35px;top:469px;width:1859px;height:22px;background:#baa0b9;"></div>
<div class="a" style="left:34px;top:316px;width:1860px;height:2px;background:#8e1f8e;"></div>
<div class="a" style="left:34px;top:342px;width:1860px;height:1px;background:#9b3a9b;"></div>
<div class="a" style="left:34px;top:367px;width:1860px;height:1px;background:#9b3a9b;"></div>
<div class="a" style="left:34px;top:392px;width:1860px;height:1px;background:#9b3a9b;"></div>
<div class="a" style="left:34px;top:417px;width:1860px;height:1px;background:#9b3a9b;"></div>
<div class="a" style="left:34px;top:442px;width:1860px;height:1px;background:#9b3a9b;"></div>
<div class="a" style="left:34px;top:467px;width:1860px;height:1px;background:#9b3a9b;"></div>
<div class="a" style="left:34px;top:492px;width:1860px;height:1px;background:#9b3a9b;"></div>
<div class="a" style="left:305px;top:293px;width:1px;height:199px;background:#9b3a9b;"></div>
<div class="a" style="left:305px;top:319px;width:1px;height:22px;background:#7c2a7c;"></div>
<div class="a" style="left:305px;top:469px;width:1px;height:22px;background:#7c2a7c;"></div>
<div class="a" style="left:487px;top:293px;width:1px;height:199px;background:#9b3a9b;"></div>
<div class="a" style="left:487px;top:319px;width:1px;height:22px;background:#7c2a7c;"></div>
<div class="a" style="left:487px;top:469px;width:1px;height:22px;background:#7c2a7c;"></div>
<div class="a" style="left:692px;top:293px;width:1px;height:199px;background:#9b3a9b;"></div>
<div class="a" style="left:692px;top:319px;width:1px;height:22px;background:#7c2a7c;"></div>
<div class="a" style="left:692px;top:469px;width:1px;height:22px;background:#7c2a7c;"></div>
<div class="a" style="left:841px;top:293px;width:1px;height:199px;background:#9b3a9b;"></div>
<div class="a" style="left:841px;top:319px;width:1px;height:22px;background:#7c2a7c;"></div>
<div class="a" style="left:841px;top:469px;width:1px;height:22px;background:#7c2a7c;"></div>
<div class="a" style="left:1105px;top:293px;width:1px;height:199px;background:#9b3a9b;"></div>
<div class="a" style="left:1105px;top:319px;width:1px;height:22px;background:#7c2a7c;"></div>
<div class="a" style="left:1105px;top:469px;width:1px;height:22px;background:#7c2a7c;"></div>
<div class="a" style="left:1209px;top:293px;width:1px;height:199px;background:#9b3a9b;"></div>
<div class="a" style="left:1209px;top:319px;width:1px;height:22px;background:#7c2a7c;"></div>
<div class="a" style="left:1209px;top:469px;width:1px;height:22px;background:#7c2a7c;"></div>
<div class="a" style="left:1365px;top:293px;width:1px;height:199px;background:#9b3a9b;"></div>
<div class="a" style="left:1365px;top:319px;width:1px;height:22px;background:#7c2a7c;"></div>
<div class="a" style="left:1365px;top:469px;width:1px;height:22px;background:#7c2a7c;"></div>
<div class="a" style="left:1558px;top:293px;width:1px;height:199px;background:#9b3a9b;"></div>
<div class="a" style="left:1558px;top:319px;width:1px;height:22px;background:#7c2a7c;"></div>
<div class="a" style="left:1558px;top:469px;width:1px;height:22px;background:#7c2a7c;"></div>
<div class="a" style="left:35px;top:319px;width:269px;height:23px;background:#f2d0ef;border:1px solid #217346;"></div>
<div class="t" style="left:-331.00px;width:1000px;text-align:center;top:297.03px;font-size:16.2px;color:#111111;font-weight:bold;transform:scaleX(0.9662);transform-origin:center 50%;">TaskId</div>
<div class="t" style="left:-104.00px;width:1000px;text-align:center;top:297.03px;font-size:16.2px;color:#111111;font-weight:bold;transform:scaleX(0.9447);transform-origin:center 50%;">assigneePriority</div>
<div class="t" style="left:89.50px;width:1000px;text-align:center;top:297.03px;font-size:16.2px;color:#111111;font-weight:bold;transform:scaleX(0.9965);transform-origin:center 50%;">completedDateTime</div>
<div class="t" style="left:266.50px;width:1000px;text-align:center;top:297.03px;font-size:16.2px;color:#111111;font-weight:bold;transform:scaleX(0.9807);transform-origin:center 50%;">dueDateTime</div>
<div class="t" style="left:473.00px;width:1000px;text-align:center;top:297.03px;font-size:16.2px;color:#111111;font-weight:bold;transform:scaleX(0.9712);transform-origin:center 50%;">planId</div>
<div class="t" style="left:657.00px;width:1000px;text-align:center;top:297.03px;font-size:16.2px;color:#111111;font-weight:bold;transform:scaleX(0.9773);transform-origin:center 50%;">priority</div>
<div class="t" style="left:787.00px;width:1000px;text-align:center;top:297.03px;font-size:16.2px;color:#111111;font-weight:bold;transform:scaleX(0.9835);transform-origin:center 50%;">startDateTime</div>
<div class="t" style="left:961.50px;width:1000px;text-align:center;top:297.03px;font-size:16.2px;color:#111111;font-weight:bold;transform:scaleX(1.0423);transform-origin:center 50%;">title</div>
<div class="t" style="left:1586.40px;top:297.03px;font-size:16.2px;color:#111111;font-weight:bold;transform:scaleX(0.9375);transform-origin:left 50%;">assignedToTaskBoardFormat_id (Readonly)</div>
<div class="a" style="left:284px;top:295px;width:21px;height:21px;background:linear-gradient(#fdfdfd,#eef0f2);border:1px solid #a9adb2;"></div>
<svg class="a" style="left:290px;top:303px;" width="9" height="5" viewBox="0 0 9 5"><path d="M0 0 H9 L4.5 5 Z" fill="#5b5b5b"/></svg>
<div class="a" style="left:466px;top:295px;width:21px;height:21px;background:linear-gradient(#fdfdfd,#eef0f2);border:1px solid #a9adb2;"></div>
<svg class="a" style="left:472px;top:303px;" width="9" height="5" viewBox="0 0 9 5"><path d="M0 0 H9 L4.5 5 Z" fill="#5b5b5b"/></svg>
<div class="a" style="left:671px;top:295px;width:21px;height:21px;background:linear-gradient(#fdfdfd,#eef0f2);border:1px solid #a9adb2;"></div>
<svg class="a" style="left:677px;top:303px;" width="9" height="5" viewBox="0 0 9 5"><path d="M0 0 H9 L4.5 5 Z" fill="#5b5b5b"/></svg>
<div class="a" style="left:820px;top:295px;width:21px;height:21px;background:linear-gradient(#fdfdfd,#eef0f2);border:1px solid #a9adb2;"></div>
<svg class="a" style="left:826px;top:303px;" width="9" height="5" viewBox="0 0 9 5"><path d="M0 0 H9 L4.5 5 Z" fill="#5b5b5b"/></svg>
<div class="a" style="left:1084px;top:295px;width:21px;height:21px;background:linear-gradient(#fdfdfd,#eef0f2);border:1px solid #a9adb2;"></div>
<svg class="a" style="left:1090px;top:303px;" width="9" height="5" viewBox="0 0 9 5"><path d="M0 0 H9 L4.5 5 Z" fill="#5b5b5b"/></svg>
<div class="a" style="left:1188px;top:295px;width:21px;height:21px;background:linear-gradient(#fdfdfd,#eef0f2);border:1px solid #a9adb2;"></div>
<svg class="a" style="left:1194px;top:303px;" width="9" height="5" viewBox="0 0 9 5"><path d="M0 0 H9 L4.5 5 Z" fill="#5b5b5b"/></svg>
<div class="a" style="left:1344px;top:295px;width:21px;height:21px;background:linear-gradient(#fdfdfd,#eef0f2);border:1px solid #a9adb2;"></div>
<svg class="a" style="left:1350px;top:303px;" width="9" height="5" viewBox="0 0 9 5"><path d="M0 0 H9 L4.5 5 Z" fill="#5b5b5b"/></svg>
<div class="a" style="left:1537px;top:295px;width:21px;height:21px;background:linear-gradient(#fdfdfd,#eef0f2);border:1px solid #a9adb2;"></div>
<svg class="a" style="left:1543px;top:303px;" width="9" height="5" viewBox="0 0 9 5"><path d="M0 0 H9 L4.5 5 Z" fill="#5b5b5b"/></svg>
<div class="t" style="left:37.00px;top:323.14px;font-size:16.3px;color:#111111;transform:scaleX(0.9403);transform-origin:left 50%;-webkit-text-stroke:0.22px currentColor;">AOobEFHaoUKZVjnR5gvHi2UACs4D</div>
<div class="t" style="left:309.00px;top:323.14px;font-size:16.3px;color:#111111;transform:scaleX(0.9893);transform-origin:left 50%;-webkit-text-stroke:0.22px currentColor;">8584404960851497441</div>
<div class="t" style="right:1080.50px;top:323.14px;font-size:16.3px;color:#111111;transform:scaleX(0.9973);transform-origin:right 50%;-webkit-text-stroke:0.22px currentColor;">14-11-2025 15:30</div>
<svg class="a" style="left:306px;top:319px;" width="7" height="7" viewBox="0 0 7 7"><path d="M0 0 H6.5 L0 6.5 Z" fill="#0a8a0a"/></svg>
<div class="t" style="left:37.00px;top:348.14px;font-size:16.3px;color:#111111;transform:scaleX(0.9344);transform-origin:left 50%;-webkit-text-stroke:0.22px currentColor;">Gf_Nh7IfbEWC64yT5gE0MGUAE5z6</div>
<div class="t" style="left:309.00px;top:348.14px;font-size:16.3px;color:#111111;transform:scaleX(0.9893);transform-origin:left 50%;-webkit-text-stroke:0.22px currentColor;">8584404960727365629</div>
<div class="t" style="right:1080.50px;top:348.14px;font-size:16.3px;color:#111111;transform:scaleX(0.9973);transform-origin:right 50%;-webkit-text-stroke:0.22px currentColor;">05-11-2025 15:30</div>
<svg class="a" style="left:306px;top:343px;" width="7" height="7" viewBox="0 0 7 7"><path d="M0 0 H6.5 L0 6.5 Z" fill="#0a8a0a"/></svg>
<div class="t" style="left:37.00px;top:373.14px;font-size:16.3px;color:#111111;transform:scaleX(0.9310);transform-origin:left 50%;-webkit-text-stroke:0.22px currentColor;">YTwK51wBB0GiUIapEBiUhGUAEYE2</div>
<div class="t" style="left:309.00px;top:373.14px;font-size:16.3px;color:#111111;transform:scaleX(0.9893);transform-origin:left 50%;-webkit-text-stroke:0.22px currentColor;">8584404960589295664</div>
<div class="t" style="right:1080.50px;top:373.14px;font-size:16.3px;color:#111111;transform:scaleX(0.9973);transform-origin:right 50%;-webkit-text-stroke:0.22px currentColor;">01-11-2025 15:30</div>
<svg class="a" style="left:306px;top:368px;" width="7" height="7" viewBox="0 0 7 7"><path d="M0 0 H6.5 L0 6.5 Z" fill="#0a8a0a"/></svg>
<div class="t" style="left:37.00px;top:398.14px;font-size:16.3px;color:#111111;transform:scaleX(0.9659);transform-origin:left 50%;-webkit-text-stroke:0.22px currentColor;">xmS9sdkcUkms-Lsy26ryGGUAH9lz</div>
<div class="t" style="left:309.00px;top:398.14px;font-size:16.3px;color:#111111;transform:scaleX(0.9893);transform-origin:left 50%;-webkit-text-stroke:0.22px currentColor;">8584404960481239776</div>
<div class="t" style="right:1080.50px;top:398.14px;font-size:16.3px;color:#111111;transform:scaleX(0.9878);transform-origin:right 50%;-webkit-text-stroke:0.22px currentColor;">16-10-2025 15:30</div>
<svg class="a" style="left:306px;top:393px;" width="7" height="7" viewBox="0 0 7 7"><path d="M0 0 H6.5 L0 6.5 Z" fill="#0a8a0a"/></svg>
<div class="t" style="right:1229.30px;top:398.14px;font-size:16.3px;color:#111111;transform:scaleX(0.9878);transform-origin:right 50%;-webkit-text-stroke:0.22px currentColor;">21-10-2025 15:43</div>
<div class="t" style="left:845.40px;top:323.14px;font-size:16.3px;color:#111111;transform:scaleX(0.9287);transform-origin:left 50%;-webkit-text-stroke:0.22px currentColor;">G1ur-a72X0iZ6uJKoTnRR2UAG0MY</div>
<div class="t" style="right:711.20px;top:323.14px;font-size:16.3px;color:#111111;transform:scaleX(0.9490);transform-origin:right 50%;-webkit-text-stroke:0.22px currentColor;">5</div>
<div class="t" style="right:556.20px;top:323.14px;font-size:16.3px;color:#111111;transform:scaleX(0.9973);transform-origin:right 50%;-webkit-text-stroke:0.22px currentColor;">10-11-2025 00:00</div>
<div class="t" style="left:1369.50px;top:323.14px;font-size:16.3px;color:#111111;transform:scaleX(1.0006);transform-origin:left 50%;-webkit-text-stroke:0.22px currentColor;">Create documentation</div>
<div class="t" style="left:845.40px;top:348.14px;font-size:16.3px;color:#111111;transform:scaleX(0.9287);transform-origin:left 50%;-webkit-text-stroke:0.22px currentColor;">G1ur-a72X0iZ6uJKoTnRR2UAG0MY</div>
<div class="t" style="right:711.20px;top:348.14px;font-size:16.3px;color:#111111;transform:scaleX(0.9490);transform-origin:right 50%;-webkit-text-stroke:0.22px currentColor;">1</div>
<div class="t" style="right:556.20px;top:348.14px;font-size:16.3px;color:#111111;transform:scaleX(0.9878);transform-origin:right 50%;-webkit-text-stroke:0.22px currentColor;">31-10-2025 00:00</div>
<div class="t" style="left:1369.50px;top:348.14px;font-size:16.3px;color:#111111;transform:scaleX(0.9618);transform-origin:left 50%;-webkit-text-stroke:0.22px currentColor;">Deploy changes to Github</div>
<div class="t" style="left:845.40px;top:373.14px;font-size:16.3px;color:#111111;transform:scaleX(0.9287);transform-origin:left 50%;-webkit-text-stroke:0.22px currentColor;">G1ur-a72X0iZ6uJKoTnRR2UAG0MY</div>
<div class="t" style="right:711.20px;top:373.14px;font-size:16.3px;color:#111111;transform:scaleX(0.9490);transform-origin:right 50%;-webkit-text-stroke:0.22px currentColor;">3</div>
<div class="t" style="right:556.20px;top:373.14px;font-size:16.3px;color:#111111;transform:scaleX(0.9878);transform-origin:right 50%;-webkit-text-stroke:0.22px currentColor;">21-10-2025 00:00</div>
<div class="t" style="left:1369.50px;top:373.14px;font-size:16.3px;color:#111111;transform:scaleX(0.9226);transform-origin:left 50%;-webkit-text-stroke:0.22px currentColor;">Build UI</div>
<div class="t" style="left:845.40px;top:398.14px;font-size:16.3px;color:#111111;transform:scaleX(0.9287);transform-origin:left 50%;-webkit-text-stroke:0.22px currentColor;">G1ur-a72X0iZ6uJKoTnRR2UAG0MY</div>
<div class="t" style="right:711.20px;top:398.14px;font-size:16.3px;color:#111111;transform:scaleX(0.9490);transform-origin:right 50%;-webkit-text-stroke:0.22px currentColor;">9</div>
<div class="t" style="right:556.20px;top:398.14px;font-size:16.3px;color:#111111;transform:scaleX(0.9878);transform-origin:right 50%;-webkit-text-stroke:0.22px currentColor;">14-10-2025 00:00</div>
<div class="t" style="left:1369.50px;top:398.14px;font-size:16.3px;color:#111111;transform:scaleX(0.9726);transform-origin:left 50%;-webkit-text-stroke:0.22px currentColor;">Marketing Banner</div>
<div class="t" style="left:845.40px;top:423.14px;font-size:16.3px;color:#ff0000;transform:scaleX(0.9287);transform-origin:left 50%;-webkit-text-stroke:0.22px currentColor;">G1ur-a72X0iZ6uJKoTnRR2UAG0MY</div>
<div class="t" style="right:711.20px;top:423.14px;font-size:16.3px;color:#ff0000;transform:scaleX(0.9490);transform-origin:right 50%;-webkit-text-stroke:0.22px currentColor;">4</div>
<div class="t" style="right:556.20px;top:423.14px;font-size:16.3px;color:#ff0000;transform:scaleX(0.9878);transform-origin:right 50%;-webkit-text-stroke:0.22px currentColor;">21-10-2025 00:00</div>
<div class="t" style="left:1369.50px;top:423.14px;font-size:16.3px;color:#ff0000;transform:scaleX(0.9860);transform-origin:left 50%;-webkit-text-stroke:0.22px currentColor;">Update Document</div>
<div class="t" style="left:845.40px;top:448.14px;font-size:16.3px;color:#ff0000;transform:scaleX(0.9287);transform-origin:left 50%;-webkit-text-stroke:0.22px currentColor;">G1ur-a72X0iZ6uJKoTnRR2UAG0MY</div>
<div class="t" style="right:711.20px;top:448.14px;font-size:16.3px;color:#ff0000;transform:scaleX(0.9490);transform-origin:right 50%;-webkit-text-stroke:0.22px currentColor;">2</div>
<div class="t" style="right:556.20px;top:448.14px;font-size:16.3px;color:#ff0000;transform:scaleX(0.9878);transform-origin:right 50%;-webkit-text-stroke:0.22px currentColor;">14-10-2025 00:00</div>
<div class="t" style="left:1369.50px;top:448.14px;font-size:16.3px;color:#ff0000;transform:scaleX(0.9698);transform-origin:left 50%;-webkit-text-stroke:0.22px currentColor;">Create Marketing Video</div>
<div class="t" style="left:845.40px;top:473.14px;font-size:16.3px;color:#c40b0b;transform:scaleX(0.9287);transform-origin:left 50%;-webkit-text-stroke:0.22px currentColor;">G1ur-a72X0iZ6uJKoTnRR2UAG0MY</div>
<div class="t" style="right:711.20px;top:473.14px;font-size:16.3px;color:#c40b0b;transform:scaleX(0.9490);transform-origin:right 50%;-webkit-text-stroke:0.22px currentColor;">6</div>
<div class="t" style="right:556.20px;top:473.14px;font-size:16.3px;color:#c40b0b;transform:scaleX(0.9878);transform-origin:right 50%;-webkit-text-stroke:0.22px currentColor;">14-10-2025 00:00</div>
<div class="t" style="left:1369.50px;top:473.14px;font-size:16.3px;color:#c40b0b;transform:scaleX(0.9627);transform-origin:left 50%;-webkit-text-stroke:0.22px currentColor;">Create a Deck</div>
<div class="a" style="left:1894px;top:269px;width:24px;height:746px;background:#050505;"></div>
<div class="a" style="left:1897px;top:269px;width:21px;height:746px;background:#161616;border-radius:9px 0 0 9px;"></div>
<svg class="a" style="left:1901px;top:274px;" width="13" height="11" viewBox="0 0 13 11"><path d="M6.5 1.5 L12 9.5 H1 Z" fill="#9a9a9a" stroke="#9a9a9a" stroke-width="1.2" stroke-linejoin="round"/></svg>
<div class="a" style="left:1902px;top:290px;width:11px;height:192px;background:#9b9b9b;border-radius:5.5px;"></div>
<svg class="a" style="left:1901px;top:999px;" width="13" height="11" viewBox="0 0 13 11"><path d="M1 1.5 H12 L6.5 9.5 Z" fill="#9a9a9a" stroke="#9a9a9a" stroke-width="1.2" stroke-linejoin="round"/></svg>
<div class="a" style="left:0px;top:1012px;width:1918px;height:40px;background:#0a0a0a;"></div>
<div class="a" style="left:132px;top:1012px;width:158px;height:10px;background:#ffffff;"></div>
<div class="a" style="left:0;top:1012px;width:140px;height:40px;background:#0a0a0a;border-top-right-radius:9px;"></div>
<div class="a" style="left:281px;top:1012px;width:1637px;height:40px;background:#0a0a0a;border-top-left-radius:9px;"></div>
<div class="a" style="left:140px;top:1012px;width:141px;height:35px;background:#ffffff;border-radius:0 0 7px 7px;"></div>
<div class="t" style="left:151.50px;top:1019.90px;font-size:18px;color:#2b2b2b;transform:scaleX(0.9642);transform-origin:left 50%;">Required Tasks</div>
<div class="a" style="left:151px;top:1042px;width:120px;height:2px;background:#1d6b3a;"></div>
<svg class="a" style="left:30px;top:1024px;" width="11" height="14" viewBox="0 0 11 14"><path d="M9 1 L2.5 7 L9 13" fill="none" stroke="#9a9a9a" stroke-width="1.3"/></svg>
<svg class="a" style="left:71px;top:1024px;" width="11" height="14" viewBox="0 0 11 14"><path d="M2 1 L8.5 7 L2 13" fill="none" stroke="#9a9a9a" stroke-width="1.3"/></svg>
<div class="a" style="left:286px;top:1020px;width:1px;height:24px;background:#6a6a6a;"></div>
<div class="t" style="left:302.00px;top:1023.10px;font-size:18px;color:#f2f2f2;transform:scaleX(0.8910);transform-origin:left 50%;">Tasks</div>
<div class="a" style="left:360px;top:1020px;width:1px;height:24px;background:#6a6a6a;"></div>
<div class="t" style="left:376.70px;top:1023.10px;font-size:18px;color:#f2f2f2;transform:scaleX(0.8850);transform-origin:left 50%;">Sheet1</div>
<div class="a" style="left:443px;top:1020px;width:1px;height:24px;background:#6a6a6a;"></div>
<svg class="a" style="left:495px;top:1023px;" width="16" height="16" viewBox="0 0 16 16"><path d="M8 1 V15 M1 8 H15" stroke="#f0f0f0" stroke-width="1.5"/></svg>
<div class="a" style="left:1136px;top:1012px;width:40px;height:40px;background:#121212;"></div>
<div class="a" style="left:1154px;top:1027px;width:3px;height:3px;background:#e0e0e0;"></div>
<div class="a" style="left:1154px;top:1031.5px;width:3px;height:3px;background:#e0e0e0;"></div>
<div class="a" style="left:1154px;top:1036px;width:3px;height:3px;background:#e0e0e0;"></div>
<div class="a" style="left:1177px;top:1020px;width:718px;height:23px;background:#141414;border-radius:11px;"></div>
<svg class="a" style="left:1180px;top:1025px;" width="12" height="13" viewBox="0 0 12 13"><path d="M1.5 6.5 L10 1.5 V11.5 Z" fill="#8a8a8a" stroke="#8a8a8a" stroke-linejoin="round"/></svg>
<div class="a" style="left:1197px;top:1026px;width:469px;height:11px;background:#8f8f8f;border-radius:5.5px;"></div>
<svg class="a" style="left:1880px;top:1025px;" width="12" height="13" viewBox="0 0 12 13"><path d="M10.5 6.5 L2 1.5 V11.5 Z" fill="#8a8a8a" stroke="#8a8a8a" stroke-linejoin="round"/></svg>
<div class="a" style="left:0px;top:1052px;width:1918px;height:1px;background:#333333;"></div>
<div class="a" style="left:0px;top:1053px;width:1918px;height:25px;background:#151515;"></div>
<div class="t" style="left:15.00px;top:1059.95px;font-size:13px;color:#f0f0f0;transform:scaleX(1.0149);transform-origin:left 50%;">Update/Insert completed. 0 rows retrieved in 2.18 seconds.</div>
<div class="t" style="left:832.90px;top:1059.69px;font-size:13.3px;color:#f0f0f0;transform:scaleX(0.9536);transform-origin:left 50%;">Average: 27580.32917</div>
<div class="t" style="left:981.00px;top:1059.69px;font-size:13.3px;color:#f0f0f0;transform:scaleX(0.9433);transform-origin:left 50%;">Count: 13</div>
<div class="t" style="left:1056.00px;top:1059.69px;font-size:13.3px;color:#f0f0f0;transform:scaleX(0.9299);transform-origin:left 50%;">Sum: 137901.6458</div>
<svg class="a" style="left:1180px;top:1054px;" width="26" height="24" viewBox="0 0 26 24"><path d="M8.2 10 V6.4 L15.8 2.4 L23.5 6.4 V16.5 L16 20.5" fill="none" stroke="#ececec" stroke-width="1.3"/><path d="M8.5 12.8 L12.3 15 V19.4 L8.5 21.6 L4.7 19.4 V15 Z" fill="none" stroke="#ececec" stroke-width="1.3"/></svg>
<div class="t" style="left:1206.60px;top:1059.69px;font-size:13.3px;color:#f0f0f0;transform:scaleX(0.9998);transform-origin:left 50%;">One or more add-ins failed to install custom functions.</div>
<div class="a" style="left:1548px;top:1053px;width:49px;height:25px;background:#262626;"></div>
<svg class="a" style="left:1563px;top:1056px;" width="19" height="19" viewBox="0 0 19 19"><rect x="0.8" y="0.8" width="17" height="17" fill="none" stroke="#ececec" stroke-width="1.6"/><path d="M6.5 1 V18 M12 1 V18 M1 6.5 H18 M1 12 H18" stroke="#ececec" stroke-width="1.5"/></svg>
<svg class="a" style="left:1613px;top:1056px;" width="20" height="19" viewBox="0 0 20 19"><rect x="0.8" y="0.8" width="17.4" height="17" fill="none" stroke="#ececec" stroke-width="1.6"/><rect x="4.8" y="4" width="9.6" height="11" fill="none" stroke="#ececec" stroke-width="1.1"/><path d="M6.8 7.3 H12.4 M6.8 9.5 H12.4 M6.8 11.7 H12.4" stroke="#cfcfcf" stroke-width="1"/></svg>
<svg class="a" style="left:1663px;top:1056px;" width="20" height="19" viewBox="0 0 20 19"><rect x="0.8" y="0.8" width="17.4" height="17" fill="none" stroke="#ececec" stroke-width="1.6"/><path d="M6 1 V10.3 H11 V1" fill="none" stroke="#ececec" stroke-width="1.4"/><path d="M1 10.3 H6" stroke="#ececec" stroke-width="1.4"/></svg>
<div class="a" style="left:1705px;top:1065px;width:10px;height:1.3px;background:#e0e0e0;"></div>
<div class="a" style="left:1722px;top:1066px;width:124px;height:1px;background:#9a9a9a;"></div>
<div class="a" style="left:1780px;top:1058px;width:7px;height:15px;background:#c8c8c8;border-radius:1px;"></div>
<svg class="a" style="left:1851px;top:1060px;" width="12" height="12" viewBox="0 0 12 12"><path d="M6 1 V11 M1 6 H11" stroke="#e0e0e0" stroke-width="1.3"/></svg>
<div class="t" style="left:1878.00px;top:1059.69px;font-size:13.3px;color:#f0f0f0;transform:scaleX(0.9231);transform-origin:left 50%;">100%</div>
<div class="a" style="left:464px;top:221px;width:236px;height:62px;background:#ededed;border-radius:6px;box-shadow:0 1px 4px rgba(0,0,0,0.35);"></div>
<div class="t" style="left:477.60px;top:231.61px;font-size:13.4px;color:#262626;font-weight:bold;transform:scaleX(0.9391);transform-origin:left 50%;">Delete Selected Rows</div>
<div class="t" style="left:477.60px;top:255.74px;font-size:13.6px;color:#3a3a3a;transform:scaleX(0.9452);transform-origin:left 50%;">Deletes the selected rows.</div>
</body></html>
